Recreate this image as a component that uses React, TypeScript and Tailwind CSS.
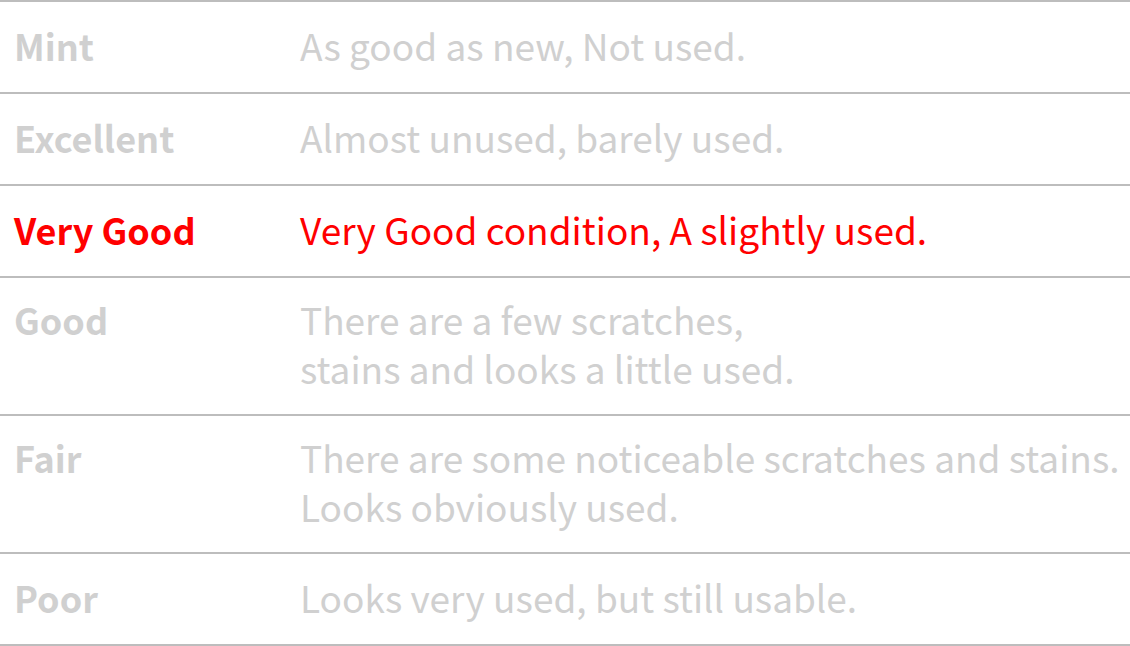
const rows = [
  { label: 'Mint', desc: ['As good as new, Not used.'] },
  { label: 'Excellent', desc: ['Almost unused, barely used.'] },
  { label: 'Very Good', desc: ['Very Good condition, A slightly used.'], active: true },
  { label: 'Good', desc: ['There are a few scratches,', 'stains and looks a little used.'] },
  { label: 'Fair', desc: ['There are some noticeable scratches and stains.', 'Looks obviously used.'] },
  { label: 'Poor', desc: ['Looks very used, but still usable.'] },
];

export default function App() {
  return (
    <div
      className="w-[1130px] h-[646px] bg-white overflow-hidden"
      style={{ fontFamily: '"Noto Sans CJK JP", "Noto Sans", sans-serif' }}
    >
      <div className="border-t-2 border-[#bdbdbd]">
        {rows.map((r) => {
          const multi = r.desc.length > 1;
          return (
            <div
              key={r.label}
              className={`flex border-b-2 border-[#bdbdbd] ${
                multi ? 'pt-[17px] pb-[21px] leading-[49px]' : 'pt-[20px] pb-[24px] leading-[46px]'
              } ${r.active ? 'text-[#ff0000]' : 'text-[#d0d0d0]'}`}
            >
              <div className="w-[300px] pl-[14px] font-bold text-[36px] shrink-0">{r.label}</div>
              <div className="flex-1 whitespace-nowrap text-[37px]">
                {r.desc.map((d) => (
                  <div key={d}>{d}</div>
                ))}
              </div>
            </div>
          );
        })}
      </div>
    </div>
  );
}
